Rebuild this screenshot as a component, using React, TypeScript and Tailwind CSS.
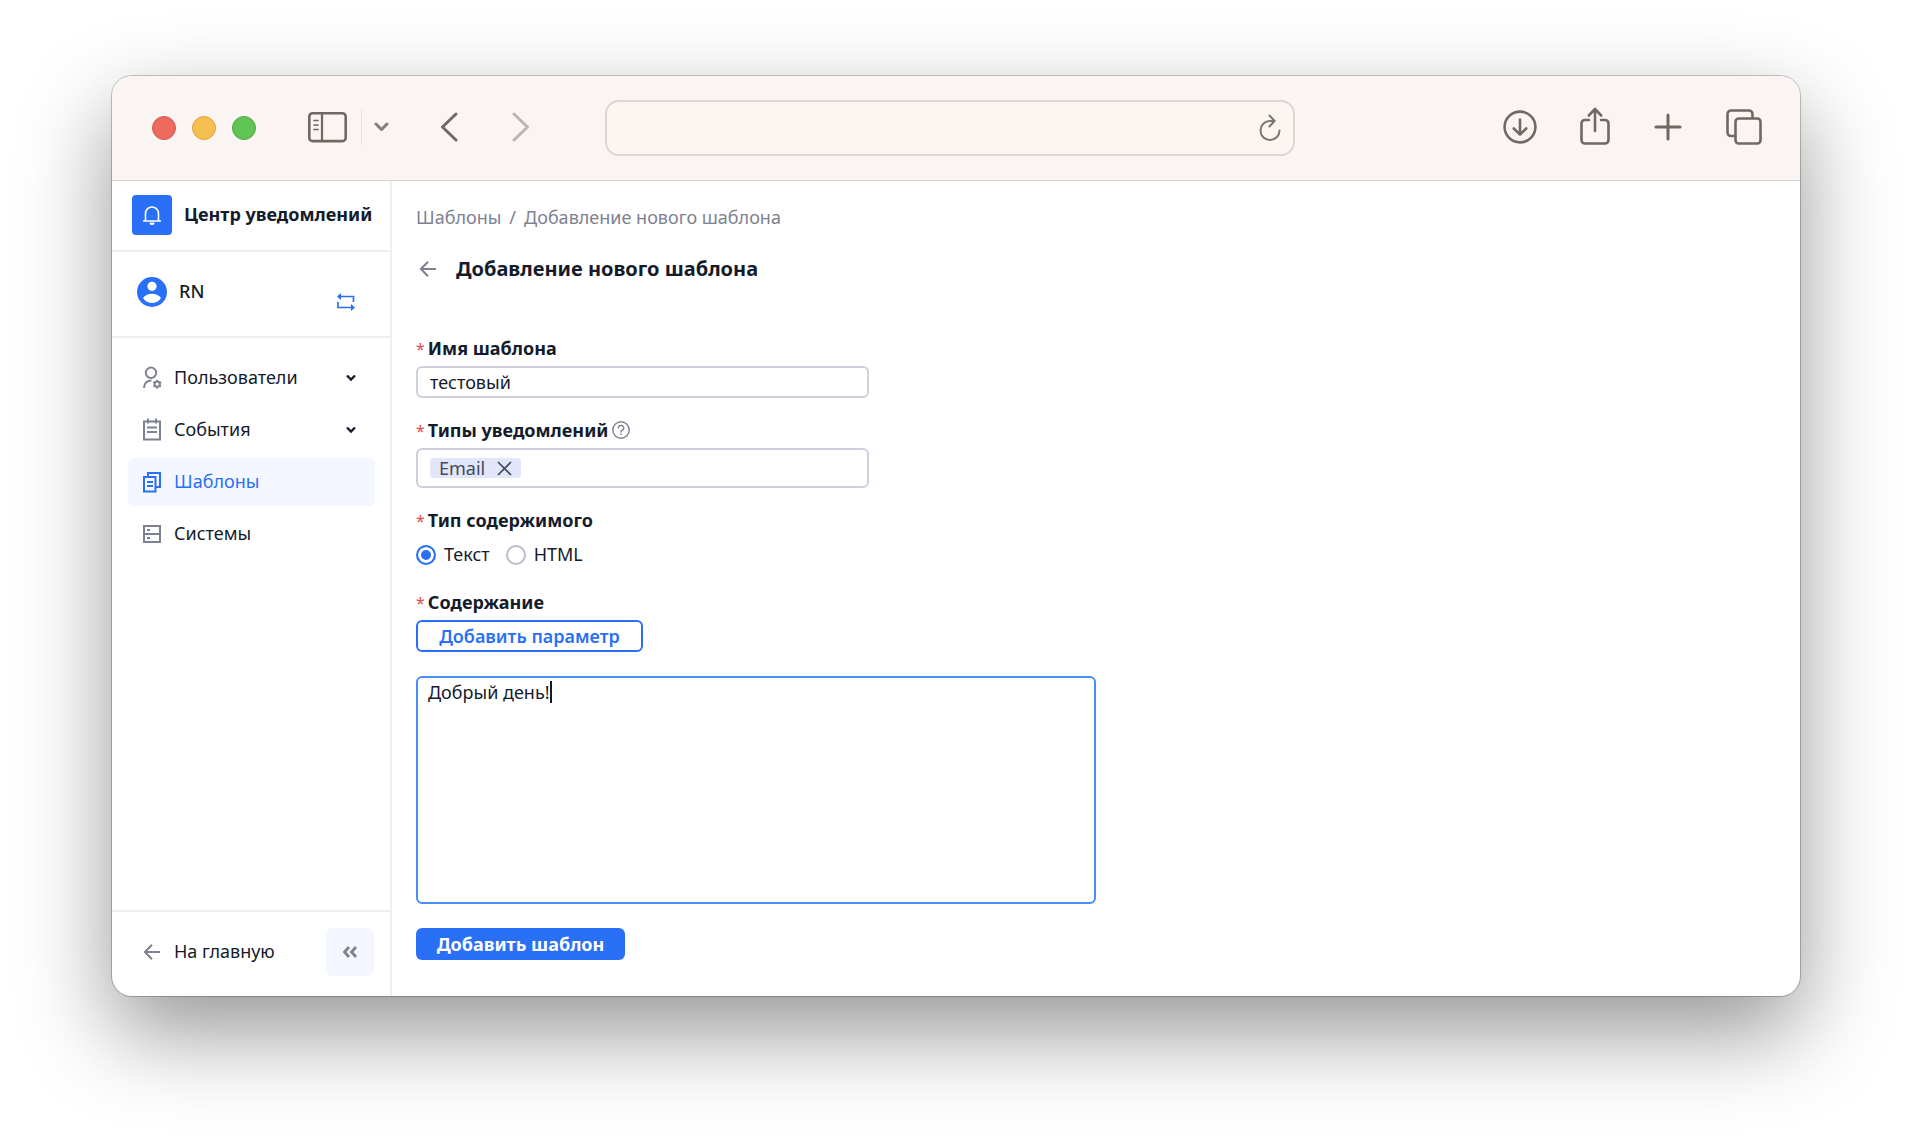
import type { ReactNode } from 'react'
import { useState } from 'react'

const iconProps = {
  fill: 'none',
  stroke: 'currentColor',
  strokeLinecap: 'round',
  strokeLinejoin: 'round',
} as const

function Toolbar() {
  return (
    <header className="flex h-[105px] items-center border-b border-[#d8d6d5] bg-[#faf5f2] pl-10 pr-[38px] text-[#6f6863]">
      <div className="flex gap-4">
        <span className="size-6 rounded-full border border-[#d9574a] bg-[#ed6a5e]" />
        <span className="size-6 rounded-full border border-[#dba33d] bg-[#f5bf4f]" />
        <span className="size-6 rounded-full border border-[#51a73e] bg-[#61c554]" />
      </div>
      <div className="flex items-center pb-[2px]">
        <button type="button" aria-label="Боковая панель" className="ml-[52px]">
          <svg width="39" height="32" viewBox="0 0 39 32" strokeWidth="2.6" {...iconProps}>
            <rect x="1.3" y="2.3" width="36.4" height="27.8" rx="3.2" />
            <path d="M14 2.5v27.5" strokeWidth="2.2" />
            <path d="M6 9.5h4M6 14h4M6 18.5h4" strokeWidth="1.7" />
          </svg>
        </button>
        <span className="ml-[14px] h-9 w-px bg-[#e6e1de]" />
        <button type="button" aria-label="Группы вкладок" className="ml-3 text-[#857d7b]">
          <svg width="15" height="10" viewBox="0 0 15 10" strokeWidth="3" {...iconProps}>
            <path d="M2 2l5.5 5.5L13 2" />
          </svg>
        </button>
        <button type="button" aria-label="Назад" className="ml-[51px]">
          <svg width="18" height="30" viewBox="0 0 18 30" strokeWidth="3" {...iconProps}>
            <path d="M16 2L2.5 15L16 28" />
          </svg>
        </button>
        <button type="button" aria-label="Вперёд" className="ml-[54px] text-[#bbb5b2]">
          <svg width="18" height="30" viewBox="0 0 18 30" strokeWidth="3" {...iconProps}>
            <path d="M2 2l13.5 13L2 28" />
          </svg>
        </button>
      </div>
      <div className="ml-[75px] mr-auto flex h-14 max-w-[690px] flex-1 items-center rounded-[14px] border-2 border-[#dcd7d4] bg-[#fbf6f2] pr-3">
        <input aria-label="Адрес" className="h-full min-w-0 flex-1 px-4 outline-none" />
        <button type="button" aria-label="Обновить" className="text-[#7d7673]">
          <svg width="22" height="28" viewBox="0 0 22 28" strokeWidth="2" {...iconProps}>
            <path d="M20.5 16.5A9.5 9.5 0 1 1 11 7h4.5" />
            <path d="M10.5 1.5l5 5.5l-5 5.5" />
          </svg>
        </button>
      </div>
      <div className="flex items-center pb-[2px]">
        <button type="button" aria-label="Загрузки">
          <svg width="34" height="34" viewBox="0 0 34 34" strokeWidth="2.6" {...iconProps}>
            <circle cx="17" cy="17" r="15.4" />
            <path d="M17 9.5v15M10.8 18.5l6.2 6.2l6.2-6.2" />
          </svg>
        </button>
        <button type="button" aria-label="Поделиться" className="ml-[43px] pb-[2px]">
          <svg width="30" height="38" viewBox="0 0 30 38" strokeWidth="2.6" {...iconProps}>
            <path d="M9 13H5a3.5 3.5 0 0 0-3.5 3.5V33a3.5 3.5 0 0 0 3.5 3.5h20a3.5 3.5 0 0 0 3.5-3.5V16.5A3.5 3.5 0 0 0 25 13h-4" />
            <path d="M15 24V2.5M8.800 8.5L15 2l6.200 6.5" />
          </svg>
        </button>
        <button type="button" aria-label="Новая вкладка" className="ml-[44px]">
          <svg width="28" height="28" viewBox="0 0 28 28" strokeWidth="3" {...iconProps}>
            <path d="M14 2v24M2 14h24" />
          </svg>
        </button>
        <button type="button" aria-label="Все вкладки" className="ml-[44px]">
          <svg width="36" height="36" viewBox="0 0 36 36" strokeWidth="2.6" {...iconProps}>
            <rect x="9.5" y="9.5" width="25" height="25" rx="3.2" />
            <path d="M9 27H5a3.5 3.5 0 0 1-3.5-3.5V5A3.5 3.5 0 0 1 5 1.5h18A3.5 3.5 0 0 1 26.5 5v4" />
          </svg>
        </button>
      </div>
    </header>
  )
}

function ArrowLeft() {
  return (
    <svg width="18" height="18" viewBox="0 0 18 18" fill="none" stroke="currentColor" strokeWidth="2">
      <path d="M17 9H2.5M9 1.7L1.9 9L9 16.3" />
    </svg>
  )
}

function UserIcon() {
  return (
    <svg width="20" height="24" viewBox="0 0 20 24" fill="none" stroke="currentColor" strokeWidth="2">
      <circle cx="9" cy="6.8" r="5.2" />
      <path d="M2 22c0-4.5 3-7.5 7.5-7.5" />
      <circle cx="15.2" cy="18.2" r="2.6" />
      <path
        d="M15.2 13.7v2M15.2 20.7v2M11.3 15.95l1.7 1M17.4 19.45l1.7 1M11.3 20.45l1.7-1M17.4 16.95l1.7-1"
        strokeWidth="1.7"
      />
    </svg>
  )
}

function EventIcon() {
  return (
    <svg width="20" height="24" viewBox="0 0 20 24" fill="none" stroke="currentColor" strokeWidth="2">
      <path d="M2 3.5h16v18H2zM6 .5v5M14 .5v5M5 9.5h10M5 14h10" />
    </svg>
  )
}

function TemplateIcon() {
  return (
    <svg width="20" height="24" viewBox="0 0 20 24" fill="none" stroke="currentColor" strokeWidth="2">
      <path d="M2 7h11.5v14.5H2zM6 7V3h12v14h-4.5M5 12h6M5 16h6" />
    </svg>
  )
}

function SystemIcon() {
  return (
    <svg width="20" height="24" viewBox="0 0 20 24" fill="none" stroke="currentColor" strokeWidth="2">
      <path d="M2 4h16v16H2zM2 12h16M5 8h3M5 16h3" />
    </svg>
  )
}

interface NavItemProps {
  icon: ReactNode
  label: string
  active?: boolean
  expandable?: boolean
}

function NavItem({ icon, label, active, expandable }: NavItemProps) {
  return (
    <a
      href="#"
      className={`flex h-12 items-center rounded-md pl-[14px] pr-[19px] ${active ? 'bg-[#f4f7ff] text-[#2970f6]' : ''}`}
    >
      <span className={active ? '' : 'text-[#7e8191]'}>{icon}</span>
      <span className="ml-3 pb-[2px]">{label}</span>
      {expandable && (
        <svg className="ml-auto" width="10" height="8" viewBox="0 0 10 8" fill="none" stroke="currentColor" strokeWidth="2.4">
          <path d="M1 1.5l4 4l4-4" />
        </svg>
      )}
    </a>
  )
}

function Sidebar() {
  return (
    <aside className="flex w-[280px] shrink-0 flex-col border-r-2 border-[#efefef]">
      <div className="flex h-[71px] items-start border-b-2 border-[#efefef] pl-5 pt-[14px]">
        <span className="flex size-10 items-center justify-center rounded bg-[#2970f6] text-white">
          <svg width="20" height="22" viewBox="0 0 20 22" fill="none" stroke="currentColor" strokeWidth="1.6">
            <path d="M3.5 17V9.5a6.5 6.5 0 0 1 13 0V17M1 17h18" />
            <path d="M7.5 18.5h5a2.5 2.5 0 0 1-5 0z" fill="currentColor" stroke="none" />
          </svg>
        </span>
        <span className="ml-3 mt-[7px] whitespace-nowrap font-bold">Центр уведомлений</span>
      </div>
      <div className="flex h-[86px] items-center border-b-2 border-[#efefef] pb-1 pl-[25px] pr-[34px]">
        <svg width="30" height="30" viewBox="0 0 30 30">
          <circle cx="15" cy="15" r="15" fill="#2970f6" />
          <circle cx="15" cy="9.3" r="4.6" fill="#fff" />
          <path d="M6 21c2-3 6-4.3 9-4.3s7 1.3 9 4.3c-2 3.2-5.5 5-9 5s-7-1.8-9-5z" fill="#fff" />
        </svg>
        <span className="ml-3 pb-[2px] font-medium">RN</span>
        <button type="button" aria-label="Сменить" className="ml-auto mt-5 text-[#2970f6]">
          <svg width="20" height="20" viewBox="0 0 20 20" fill="none" stroke="currentColor" strokeWidth="1.7">
            <path d="M4 4.5h13.5V10M16 15.5H2V10" />
            <path d="M5 1v7L1 4.5zM15 12v7l4-3.5z" fill="currentColor" stroke="none" />
          </svg>
        </button>
      </div>
      <nav className="flex flex-1 flex-col gap-1 py-4 pl-4 pr-[15px]">
        <NavItem icon={<UserIcon />} label="Пользователи" expandable />
        <NavItem icon={<EventIcon />} label="События" expandable />
        <NavItem icon={<TemplateIcon />} label="Шаблоны" active />
        <NavItem icon={<SystemIcon />} label="Системы" />
      </nav>
      <div className="flex items-center border-t-2 border-[#efefef] px-4 pb-5 pt-4">
        <a href="#" className="flex items-center pl-[15px]">
          <span className="text-[#7e8191]">
            <ArrowLeft />
          </span>
          <span className="ml-[13px] pb-[2px]">На главную</span>
        </a>
        <button
          type="button"
          aria-label="Свернуть"
          className="ml-auto flex size-12 items-center justify-center rounded-md bg-[#f4f7ff] text-[#7e8191]"
        >
          <svg width="16" height="12" viewBox="0 0 16 12" fill="none" stroke="currentColor" strokeWidth="2.8">
            <path d="M7 1L2.5 6L7 11M14 1L9.5 6L14 11" />
          </svg>
        </button>
      </div>
    </aside>
  )
}

function Required() {
  return <span className="mr-[3px] text-[16px] font-normal leading-none text-[#e5484d]">*</span>
}

function TemplateForm() {
  const [name, setName] = useState('тестовый')
  const [content, setContent] = useState('Добрый день!')
  const [type, setType] = useState('text')

  const radio =
    'size-5 appearance-none rounded-full border-2 border-[#b8bccb] bg-white checked:border-[#2970f6] checked:bg-[#2970f6] checked:shadow-[inset_0_0_0_3px_#fff]'

  return (
    <form className="mt-[55px] flex flex-col items-start" onSubmit={(e) => e.preventDefault()}>
      <label htmlFor="name" className="font-bold">
        <Required />
        Имя шаблона
      </label>
      <input
        id="name"
        value={name}
        onChange={(e) => setName(e.target.value)}
        className="mt-[6px] h-8 w-full max-w-[453px] rounded-md border-2 border-[#cdd0dd] px-3 outline-none"
      />

      <div className="mt-5 flex items-center">
        <label htmlFor="types" className="font-bold">
          <Required />
          Типы уведомлений
        </label>
        <svg className="ml-1 text-[#7e8191]" width="18" height="18" viewBox="0 0 18 18" strokeWidth="1.4" {...iconProps}>
          <circle cx="9" cy="9" r="8.2" />
          <path d="M6.3 7a2.7 2.5 0 1 1 4 2.2c-.9.5-1.3 1-1.3 1.8M9 13v.4" />
        </svg>
      </div>
      <div className="mt-[6px] flex h-10 w-full max-w-[453px] items-center rounded-md border-2 border-[#cdd0dd] px-3">
        <span className="flex h-5 items-center rounded bg-[#e1e6fa] px-[9px] text-[#454959]">
          Email
          <button type="button" aria-label="Удалить Email" className="ml-3">
            <svg width="15" height="15" viewBox="0 0 15 15" fill="none" stroke="currentColor" strokeWidth="1.7">
              <path d="M1 1l13 13M14 1L1 14" />
            </svg>
          </button>
        </span>
        <input id="types" className="min-w-0 flex-1 outline-none" />
      </div>

      <fieldset className="mt-5">
        <legend className="font-bold">
          <Required />
          Тип содержимого
        </legend>
        <div className="mt-[10px] flex gap-4">
          <label className="flex items-center gap-2">
            <input type="radio" name="type" className={radio} checked={type === 'text'} onChange={() => setType('text')} />
            <span className="pb-[2px]">Текст</span>
          </label>
          <label className="flex items-center gap-2">
            <input type="radio" name="type" className={radio} checked={type === 'html'} onChange={() => setType('html')} />
            <span className="pb-[2px]">HTML</span>
          </label>
        </div>
      </fieldset>

      <label htmlFor="content" className="mt-[22px] font-bold">
        <Required />
        Содержание
      </label>
      <button
        type="button"
        className="mt-[6px] flex h-8 min-w-[227px] items-center justify-center rounded-md border-2 border-[#2970f6] px-4 font-semibold text-[#2970f6]"
      >
        Добавить параметр
      </button>
      <div className="relative mt-6 w-full max-w-[680px]">
        <textarea
          id="content"
          value={content}
          onChange={(e) => setContent(e.target.value)}
          className="block h-[228px] w-full resize-none rounded-md border-2 border-[#4a8df5] px-[10px] py-[2px] outline-none"
        />
        <div className="pointer-events-none absolute left-3 top-1 flex items-center">
          <span className="invisible">{content}</span>
          <span className="h-[22px] w-[2px] bg-[#141b2b]" />
        </div>
      </div>
      <button
        type="submit"
        className="mt-6 flex h-8 min-w-[209px] items-center justify-center rounded-md bg-[#2970f6] px-4 font-bold text-white"
      >
        Добавить шаблон
      </button>
    </form>
  )
}

export default function App() {
  return (
    <div className="flex min-h-screen flex-col bg-white px-28 pb-[148px] pt-[76px] font-['Noto_Sans',sans-serif] text-[18px] leading-6 text-[#141b2b]">
      <div className="flex flex-1 flex-col overflow-hidden rounded-[20px] bg-white shadow-[0_0_0_1px_rgba(0,0,0,0.22),0_36px_90px_rgba(0,0,0,0.42)]">
        <Toolbar />
        <div className="flex flex-1">
          <Sidebar />
          <main className="min-w-0 flex-1 px-6 py-6">
            <nav className="flex gap-2 text-[#7e8191]">
              <a href="#">Шаблоны</a>
              <span>/</span>
              <span>Добавление нового шаблона</span>
            </nav>
            <div className="mt-7 flex items-center">
              <a href="#" aria-label="Назад" className="pl-[3px] text-[#7e8191]">
                <ArrowLeft />
              </a>
              <h1 className="ml-[19px] text-[20px] font-bold">Добавление нового шаблона</h1>
            </div>
            <TemplateForm />
          </main>
        </div>
      </div>
    </div>
  )
}
